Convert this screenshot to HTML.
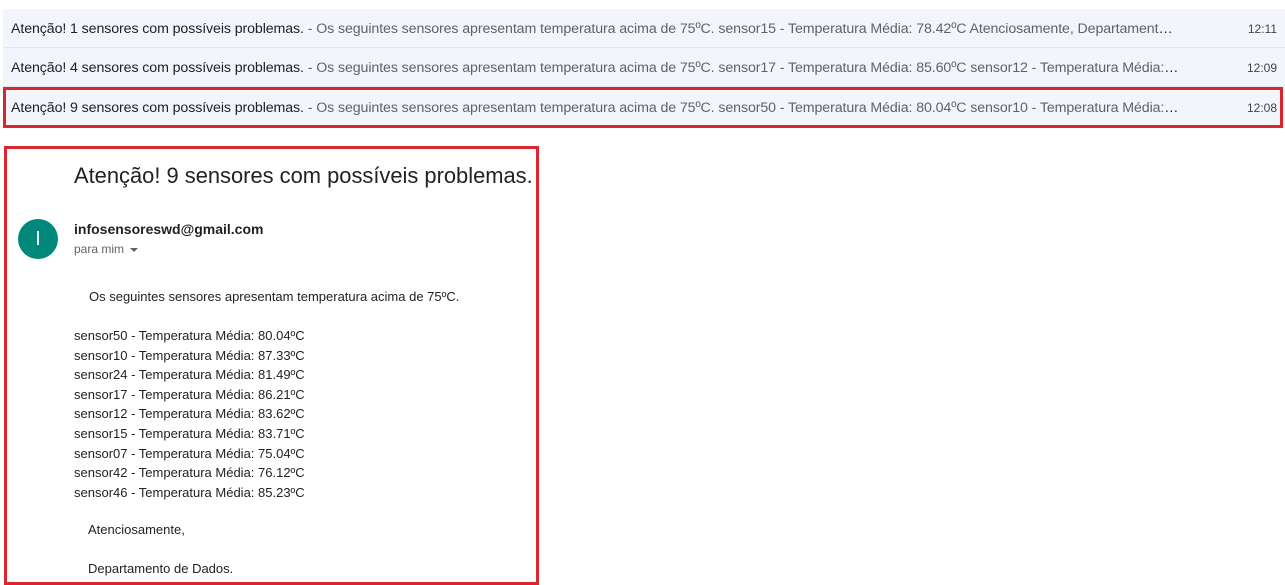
<!DOCTYPE html>
<html><head><meta charset="utf-8"><style>
body{margin:0;width:1285px;height:585px;background:#fff;font-family:"Liberation Sans",Arial,sans-serif;position:relative;overflow:hidden}
.row{position:absolute;left:3px;width:1282px;height:39px;background:#f2f6fc;border-bottom:1px solid #e3e6ec;box-sizing:border-box}
.row .t{position:absolute;left:8px;top:12px;width:1168px;font-size:14.2px;color:#202124;white-space:nowrap;overflow:hidden;text-overflow:ellipsis;letter-spacing:-0.1px}
.row .t span{color:#5f6368}
.row .d{position:absolute;right:8px;top:13px;font-size:12px;color:#444}
.sel{position:absolute;left:3px;top:87px;width:1280px;height:41px;border:3px solid #d9262f;box-sizing:border-box}
.box{position:absolute;left:4px;top:146px;width:535px;height:439px;border:3px solid #d9262f;box-sizing:border-box}
.a{position:absolute;white-space:nowrap}
.s{font-size:13px;color:#222;left:74px}
</style></head><body>
<div class="row" style="top:9px"><div class="t">Atenção! 1 sensores com possíveis problemas. <span>- Os seguintes sensores apresentam temperatura acima de 75ºC. sensor15 - Temperatura Média: 78.42ºC Atenciosamente, Departamento de Dados.</span></div><div class="d">12:11</div></div>
<div class="row" style="top:48px"><div class="t">Atenção! 4 sensores com possíveis problemas. <span>- Os seguintes sensores apresentam temperatura acima de 75ºC. sensor17 - Temperatura Média: 85.60ºC sensor12 - Temperatura Média: 83.62ºC sensor15 - Temperatura Média</span></div><div class="d">12:09</div></div>
<div class="row" style="top:88px;height:40px"><div class="t">Atenção! 9 sensores com possíveis problemas. <span>- Os seguintes sensores apresentam temperatura acima de 75ºC. sensor50 - Temperatura Média: 80.04ºC sensor10 - Temperatura Média: 87.33ºC sensor24 - Temperatura</span></div><div class="d">12:08</div></div>
<div class="sel"></div>
<div class="box"></div>
<div class="a" style="left:74px;top:163px;font-size:21.9px;color:#222">Atenção! 9 sensores com possíveis problemas.</div>
<div class="a" style="left:18px;top:219px;width:40px;height:40px;border-radius:50%;background:#00897b;color:#fff;font-size:20px;text-align:center;line-height:40px">I</div>
<div class="a" style="left:74px;top:221px;font-size:14px;font-weight:bold;color:#202124">infosensoreswd@gmail.com</div>
<div class="a" style="left:74px;top:242px;font-size:12px;color:#5f6368">para mim <span style="display:inline-block;width:0;height:0;border-left:4px solid transparent;border-right:4px solid transparent;border-top:4px solid #5f6368;vertical-align:middle;margin-left:3px"></span></div>
<div class="a s" style="left:89px;top:289px">Os seguintes sensores apresentam temperatura acima de 75ºC.</div>
<div class="a s" style="top:326px;line-height:19.6px">sensor50 - Temperatura Média: 80.04ºC<br>sensor10 - Temperatura Média: 87.33ºC<br>sensor24 - Temperatura Média: 81.49ºC<br>sensor17 - Temperatura Média: 86.21ºC<br>sensor12 - Temperatura Média: 83.62ºC<br>sensor15 - Temperatura Média: 83.71ºC<br>sensor07 - Temperatura Média: 75.04ºC<br>sensor42 - Temperatura Média: 76.12ºC<br>sensor46 - Temperatura Média: 85.23ºC</div>
<div class="a s" style="left:88px;top:522px">Atenciosamente,</div>
<div class="a s" style="left:88px;top:561px">Departamento de Dados.</div>
</body></html>
